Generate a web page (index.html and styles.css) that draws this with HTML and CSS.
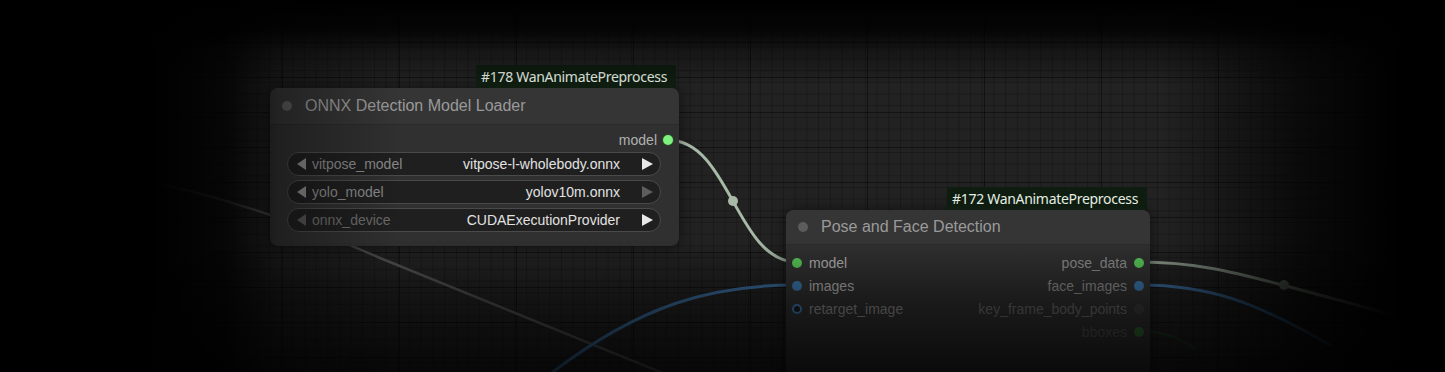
FILE: index.html
```html
<html>
  <head>
    <title>WanAnimatePreprocess</title>
    <meta name="viewport" content="width=device-width, initial-scale=1.0">
    <link rel="stylesheet" href="styles.css">
  </head>
  <body>
    <div class="canvas">
      <svg class="links" width="1445" height="372" viewBox="0 0 1445 372">
        <path class="link gray" d="M120 176 C 200 190, 290 218, 380 258 L 680 380"/>
        <path class="link blue" d="M797 285 C 715 285, 640 302, 540 382"/>
        <path class="link model" d="M668 140 C 730 140, 736 262, 797 262"/>
        <circle class="link-dot" cx="733" cy="201" r="5"/>
        <path class="link pose" d="M1139 262 C 1200 262, 1240 274, 1290 287 L 1420 322"/>
        <circle class="link-dot pose-dot" cx="1284" cy="285" r="5"/>
        <path class="link blue" d="M1139 285 C 1210 285, 1255 302, 1330 345"/>
        <path class="link bbox" d="M1139 331 C 1160 331, 1175 336, 1195 348"/>
      </svg>

      <div class="node loader">
        <div class="badge">#178 WanAnimatePreprocess</div>
        <div class="node-title"><span class="title-dot"></span>ONNX Detection Model Loader</div>
        <div class="node-body">
          <div class="out-row">model <i class="dot bright"></i></div>
          <div class="widget">
            <span class="arrow left"></span>
            <span class="w-label">vitpose_model</span>
            <span class="w-value">vitpose-l-wholebody.onnx</span>
            <span class="arrow right"></span>
          </div>
          <div class="widget">
            <span class="arrow left"></span>
            <span class="w-label">yolo_model</span>
            <span class="w-value">yolov10m.onnx</span>
            <span class="arrow right off"></span>
          </div>
          <div class="widget">
            <span class="arrow left off"></span>
            <span class="w-label faint">onnx_device</span>
            <span class="w-value">CUDAExecutionProvider</span>
            <span class="arrow right"></span>
          </div>
        </div>
      </div>

      <div class="node detect">
        <div class="badge">#172 WanAnimatePreprocess</div>
        <div class="node-title"><span class="title-dot"></span>Pose and Face Detection</div>
        <div class="slots">
          <div class="inputs">
            <div class="slot"><i class="dot green"></i>model</div>
            <div class="slot"><i class="dot blue"></i>images</div>
            <div class="slot dim"><i class="dot ring"></i>retarget_image</div>
          </div>
          <div class="outputs">
            <div class="slot">pose_data<i class="dot green"></i></div>
            <div class="slot">face_images<i class="dot blue"></i></div>
            <div class="slot dim">key_frame_body_points<i class="dot gray"></i></div>
            <div class="slot dimmer">bboxes<i class="dot dkgreen"></i></div>
          </div>
        </div>
      </div>

      <div class="vignette"></div>
    </div>
  </body>
</html>
```

FILE: styles.css
```css
body {
  margin: 0;
  background: #000;
  font-family: "Liberation Sans", Arial, sans-serif;
}

.canvas {
  position: relative;
  width: 1445px;
  height: 372px;
  overflow: hidden;
  background-color: #222222;
  background-image:
    linear-gradient(to right, rgba(0,0,0,.45) 1px, transparent 1px),
    linear-gradient(to bottom, rgba(0,0,0,.45) 1px, transparent 1px),
    linear-gradient(to right, rgba(0,0,0,.22) 1px, transparent 1px),
    linear-gradient(to bottom, rgba(0,0,0,.22) 1px, transparent 1px);
  background-size: 117px 117px, 35px 35px, 11.7px 11.7px, 11.7px 11.7px;
  background-position: 48px 0, 0 7px, 0 0, 0 0;
}

.links {
  position: absolute;
  left: 0;
  top: 0;
}

.link {
  fill: none;
  stroke-width: 3;
  stroke-linecap: round;
}

.link.gray { stroke: #505050; stroke-width: 2.5; }
.link.blue { stroke: #3b6d9d; }
.link.model { stroke: #a7b9a7; }
.link.pose { stroke: #8c9a8c; }
.link.bbox { stroke: #1f3a1f; stroke-width: 2; }

.link-dot { fill: #a7b9a7; }
.link-dot.pose-dot { fill: #7a877a; }

/* nodes */
.node {
  position: absolute;
  background: #303030;
  border-radius: 8px;
  box-shadow: 0 0 14px rgba(0,0,0,.55);
}

.node.loader {
  left: 270px;
  top: 88px;
  width: 409px;
  height: 158px;
}

.node.detect {
  left: 786px;
  top: 210px;
  width: 364px;
  height: 200px;
}

.badge {
  position: absolute;
  right: 3px;
  bottom: 100%;
  height: 23px;
  width: 200px;
  box-sizing: border-box;
  padding: 0 0 0 5px;
  background: #0f1d10;
  color: #e4ede4;
  font-family: "Noto Sans", sans-serif;
  font-size: 14px;
  letter-spacing: -0.3px;
  line-height: 23px;
  white-space: nowrap;
}

.node-title {
  display: flex;
  align-items: center;
  height: 37px;
  padding-left: 12px;
  gap: 13px;
  font-size: 16px;
  color: #9a9a9a;
  background: #353535;
  border-radius: 8px 8px 0 0;
  border-bottom: 1px solid #2a2a2a;
  box-sizing: border-box;
}

.detect .node-title {
  height: 35px;
}

.title-dot {
  width: 10px;
  height: 10px;
  border-radius: 50%;
  background: #5c5c5c;
}

.node-body {
  display: flex;
  flex-direction: column;
  gap: 4px;
  padding: 5px 18px 0 17px;
}

.out-row {
  display: flex;
  justify-content: flex-end;
  align-items: center;
  gap: 6px;
  height: 20px;
  margin-right: -12px;
  margin-bottom: -2px;
  font-size: 14px;
  color: #b0b0b0;
}

.dot {
  display: inline-block;
  width: 10px;
  height: 10px;
  border-radius: 50%;
  box-sizing: border-box;
}

.dot.bright { background: #7ef27e; box-shadow: 0 0 0 1px #2a4a2a; }
.dot.green { background: #58c758; }
.dot.blue { background: #3c78b0; }
.dot.ring { border: 2.5px solid #3c78b0; background: #1c1c1c; }
.dot.gray { background: #3c3c3c; }
.dot.dkgreen { background: #2f6a2f; }

.widget {
  display: flex;
  align-items: center;
  height: 24px;
  box-sizing: border-box;
  padding: 0 7px 0 9px;
  background: #1f1f1f;
  border: 1px solid #4a4a4a;
  border-radius: 12px;
  font-size: 14px;
}

.w-label {
  margin-left: 6px;
  color: #8a8a8a;
}

.w-label.faint { color: #6c6c6c; }

.w-value {
  margin-left: auto;
  margin-right: 22px;
  color: #e2e2e2;
}

.arrow {
  width: 0;
  height: 0;
  border-top: 6px solid transparent;
  border-bottom: 6px solid transparent;
}

.arrow.left { border-right: 9px solid #8a8a8a; }
.arrow.left.off { border-right-color: #555; }
.arrow.right { border-left: 11px solid #e8e8e8; }
.arrow.right.off { border-left-color: #5e5e5e; }

.slots {
  display: flex;
  justify-content: space-between;
  padding: 6px 6px 0 6px;
  font-size: 14px;
  color: #b0b0b0;
}

.slot {
  display: flex;
  align-items: center;
  gap: 7px;
  height: 23px;
}

.outputs .slot { justify-content: flex-end; color: #8e8e8e; }
.inputs .slot.dim { color: #8a8a8a; }
.outputs .slot.dim { color: #6a6a6a; }
.outputs .slot.dimmer { color: #505050; }

.vignette {
  position: absolute;
  inset: 0;
  pointer-events: none;
  background:
    linear-gradient(to bottom, #000 0px, rgba(0,0,0,.85) 30px, rgba(0,0,0,.35) 52px, rgba(0,0,0,0) 85px, rgba(0,0,0,0) 240px, rgba(0,0,0,.45) 300px, rgba(0,0,0,.78) 372px),
    linear-gradient(to right, #000 0px, #000 150px, rgba(0,0,0,.82) 225px, rgba(0,0,0,.35) 278px, rgba(0,0,0,0) 400px, rgba(0,0,0,0) 1160px, rgba(0,0,0,.7) 1300px, #000 1400px);
}
```
